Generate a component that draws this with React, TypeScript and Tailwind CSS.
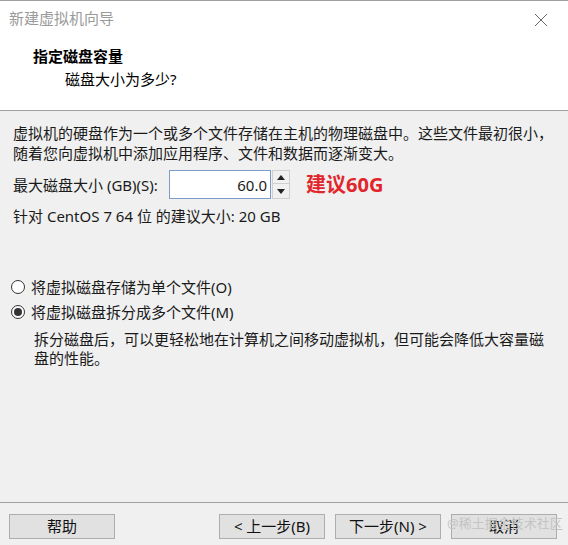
import React from "react";

const font = { fontFamily: '"Noto Sans", "Noto Sans CJK SC", sans-serif' };

function Radio({ checked }: { checked?: boolean }) {
  return (
    <span className="w-[14px] h-[14px] rounded-full border border-[#333] bg-white flex items-center justify-center shrink-0">
      {checked && <span className="w-[8px] h-[8px] rounded-full bg-[#333]" />}
    </span>
  );
}

function Btn({ children }: { children: React.ReactNode }) {
  return (
    <div className="w-[106px] h-[25px] bg-[#e1e1e1] border border-[#adadad] flex items-center justify-center text-[15px] text-[#111] leading-none">
      {children}
    </div>
  );
}

export default function App() {
  return (
    <div
      className="w-[568px] h-[545px] bg-[#f0f0f0] flex flex-col relative overflow-hidden text-[#1a1a1a]"
      style={font}
    >
      {/* header */}
      <div className="h-[111px] bg-white border-t border-b border-[#a0a0a0] flex flex-col relative">
        <div className="pl-[9px] pt-[7px] text-[15px] leading-[20px] text-[#9a9a9a]">新建虚拟机向导</div>
        <svg className="absolute left-[534px] top-[12px]" width="14" height="14" viewBox="0 0 14 14">
          <path d="M1 1 L13 13 M13 1 L1 13" stroke="#666" strokeWidth="1" fill="none" />
        </svg>
        <div className="pl-[33px] mt-[18px] text-[15px] leading-[20px] font-bold text-black">指定磁盘容量</div>
        <div className="pl-[65px] mt-[3px] text-[15px] leading-[20px] text-black">磁盘大小为多少?</div>
      </div>

      {/* body */}
      <div className="px-[13px] pt-[12px] text-[15px] leading-[20px] text-[#1a1a1a]">
        <div>
          虚拟机的硬盘作为一个或多个文件存储在主机的物理磁盘中。这些文件最初很小，
          <br />
          随着您向虚拟机中添加应用程序、文件和数据而逐渐变大。
        </div>
        <div className="flex items-center mt-[7px] h-[29px]">
          <span className="w-[156px] whitespace-nowrap">最大磁盘大小 (GB)(S):</span>
          <div className="w-[102px] h-[29px] bg-white border border-[#7a9cc6] flex items-center justify-end pr-[3px] text-[15px]">
            60.0
          </div>
          <div className="w-[18px] h-[29px] flex flex-col ml-[1px]">
            <div className="h-[14px] border border-[#cfcfcf] bg-[#f0f0f0] flex items-center justify-center">
              <svg width="8" height="5" viewBox="0 0 8 5">
                <path d="M0 5 L4 0 L8 5 Z" fill="#222" />
              </svg>
            </div>
            <div className="h-[15px] border border-t-0 border-[#cfcfcf] bg-[#f0f0f0] flex items-center justify-center">
              <svg width="8" height="5" viewBox="0 0 8 5">
                <path d="M0 0 L8 0 L4 5 Z" fill="#222" />
              </svg>
            </div>
          </div>
          <span className="ml-[16px] text-[20px] font-bold text-[#e2252b] leading-none">建议60G</span>
        </div>
        <div className="mt-[7px]">针对 CentOS 7 64 位 的建议大小: 20 GB</div>
      </div>

      <div className="pl-[11px] mt-[51px] text-[15px] leading-[20px]">
        <div className="flex items-center gap-[6px] h-[20px]">
          <Radio />
          <span>将虚拟磁盘存储为单个文件(O)</span>
        </div>
        <div className="flex items-center gap-[6px] h-[20px] mt-[5px]">
          <Radio checked />
          <span>将虚拟磁盘拆分成多个文件(M)</span>
        </div>
        <div className="pl-[23px] mt-[8px] leading-[19px]">
          拆分磁盘后，可以更轻松地在计算机之间移动虚拟机，但可能会降低大容量磁
          <br />
          盘的性能。
        </div>
      </div>

      {/* footer */}
      <div className="mt-auto h-[43px] border-t border-[#a0a0a0] flex items-start pt-[11px]">
        <div className="ml-[9px]">
          <Btn>帮助</Btn>
        </div>
        <div className="ml-auto mr-[11px] flex gap-[10px]">
          <Btn>&lt; 上一步(B)</Btn>
          <Btn>下一步(N) &gt;</Btn>
          <Btn>取消</Btn>
        </div>
      </div>

      <div className="absolute left-[447px] top-[514px] text-[13px] leading-[18px] text-[#c4c4c4] pointer-events-none">
        @稀土掘金技术社区
      </div>
    </div>
  );
}
